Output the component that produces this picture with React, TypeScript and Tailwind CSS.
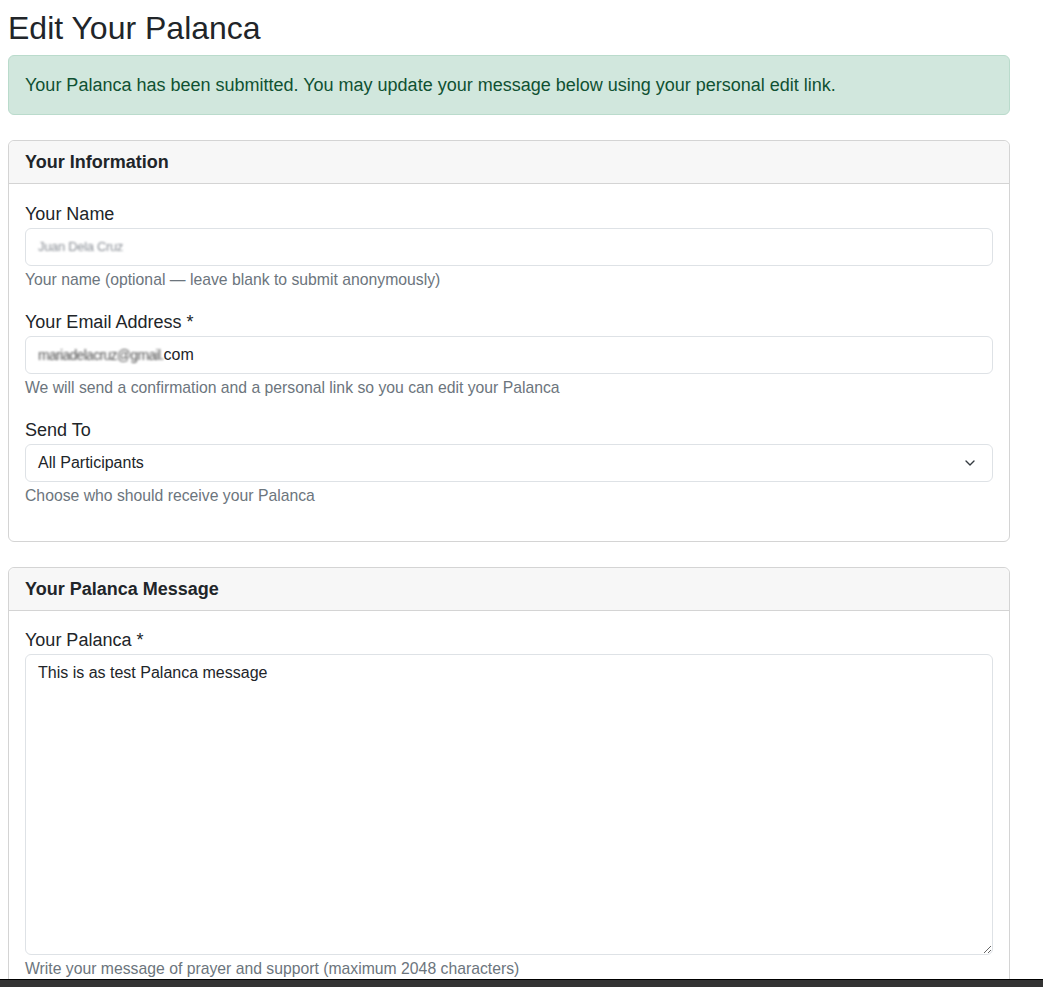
import { ChevronDown } from 'lucide-react'

const font = { fontFamily: '"Liberation Sans", Arial, sans-serif' }

function Field({
	label,
	help,
	children,
}: {
	label: string
	help: string
	children: React.ReactNode
}) {
	return (
		<div className="mb-[17px]">
			<label className="block text-[18px] leading-[27px] text-[#212529]">{label}</label>
			{children}
			<div className="mt-[2px] text-[15.75px] leading-6 text-[#6c757d]">{help}</div>
		</div>
	)
}

function Card({ title, children }: { title: string; children: React.ReactNode }) {
	return (
		<div className="mb-[25px] rounded-md border border-[#d4d4d4] bg-white">
			<div className="h-[43px] flex items-center px-4 bg-[#f7f7f7] border-b border-[#d4d4d4] rounded-t-md">
				<h5 className="text-[18px] font-bold text-[#212529]">{title}</h5>
			</div>
			<div className="px-4 pt-4 pb-4">{children}</div>
		</div>
	)
}

export default function App() {
	return (
		<div style={font} className="min-h-screen bg-white">
			<div className="ml-2 w-[1002px]">
				<h1 className="pt-[9px] text-[32px] leading-[38px] text-[#212529] mb-[8px]">Edit Your Palanca</h1>
				<div className="mb-[25px] rounded-md border border-[#badbcc] bg-[#d1e7dd] px-4 py-4 text-[18px] leading-[26px] text-[#0f5132]">
					Your Palanca has been submitted. You may update your message below using your personal edit link.
				</div>

				<Card title="Your Information">
					<div className="pt-px">
						<Field label="Your Name" help="Your name (optional — leave blank to submit anonymously)">
							<div className="h-[38px] flex items-center rounded-md border border-[#dee2e6] px-3 text-[16px]">
								<span className="blur-[1.2px] text-[#8a8f96] text-[13px] tracking-tight">Juan Dela Cruz</span>
							</div>
						</Field>
						<Field
							label="Your Email Address *"
							help="We will send a confirmation and a personal link so you can edit your Palanca"
						>
							<div className="h-[38px] flex items-center rounded-md border border-[#dee2e6] px-3 text-[16px] text-[#212529]">
								<span className="blur-[1px] text-[#555] text-[14px] tracking-tighter">mariadelacruz@gmail.</span>
								<span>com</span>
							</div>
						</Field>
						<Field label="Send To" help="Choose who should receive your Palanca">
							<div className="h-[38px] flex items-center justify-between rounded-md border border-[#dee2e6] pl-3 pr-[14px] text-[16px] text-[#212529]">
								<span>All Participants</span>
								<ChevronDown size={16} strokeWidth={2} className="text-[#343a40]" />
							</div>
						</Field>
					</div>
				</Card>

				<Card title="Your Palanca Message">
					<Field label="Your Palanca *" help="Write your message of prayer and support (maximum 2048 characters)">
						<textarea
							defaultValue="This is as test Palanca message"
							style={font}
							className="block w-full h-[301px] rounded-md border border-[#dee2e6] px-3 py-[6px] text-[16px] leading-6 text-[#212529] outline-none"
						/>
					</Field>
				</Card>
			</div>
			<div className="fixed bottom-0 left-0 right-0 h-[8px] border-t border-black bg-[#333333]" />
		</div>
	)
}
